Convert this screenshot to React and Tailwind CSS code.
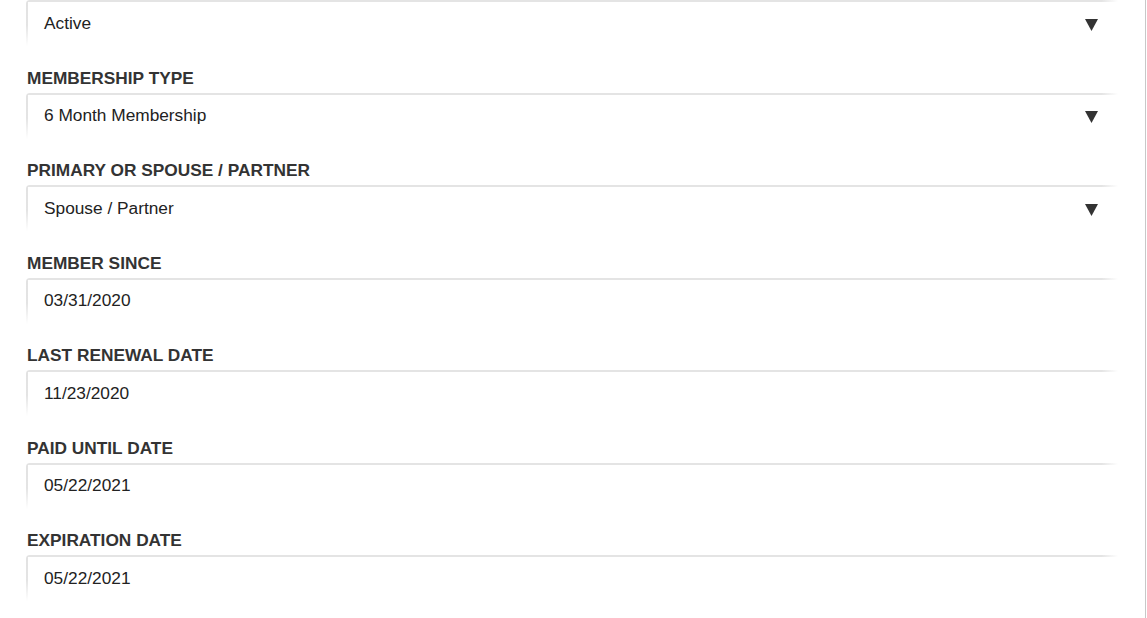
import React from 'react';

const fields = [
  { label: null, value: 'Active', select: true },
  { label: 'MEMBERSHIP TYPE', value: '6 Month Membership', select: true },
  { label: 'PRIMARY OR SPOUSE / PARTNER', value: 'Spouse / Partner', select: true },
  { label: 'MEMBER SINCE', value: '03/31/2020' },
  { label: 'LAST RENEWAL DATE', value: '11/23/2020' },
  { label: 'PAID UNTIL DATE', value: '05/22/2021' },
  { label: 'EXPIRATION DATE', value: '05/22/2021' },
];

const Caret = () => (
  <svg width="13" height="12" viewBox="0 0 13 12" className="shrink-0">
    <polygon points="0,0 13,0 6.5,12" fill="#333" />
  </svg>
);

const Field = ({ label, value, select }) => (
  <div className="mb-[21.5px]">
    {label && (
      <label className="block h-[21px] leading-[20px] mb-[4px] pl-px text-[17.3px] font-bold text-[#333]">
        {label}
      </label>
    )}
    <div className="flex items-center justify-between h-[46px] pl-[18px] pr-[20px] rounded-tl-[4px] text-[17.3px] text-[#222] [background:linear-gradient(to_bottom,#e2e2e2,#e4e4e4_55%,#fff)_left_top/2px_100%_no-repeat,linear-gradient(to_right,#e4e4e4,#e4e4e4_98.5%,#fff)_left_top/100%_2px_no-repeat,#fff]">
      <span className="pt-px">{value}</span>
      {select && (
        <span className="pt-[3px]">
          <Caret />
        </span>
      )}
    </div>
  </div>
);

export default function App() {
  return (
    <div className="w-[1147px] h-[618px] bg-white overflow-hidden" style={{ fontFamily: '"Liberation Sans", Arial, sans-serif' }}>
      <div className="w-[1146px] h-full border-r border-[#c8c8c8] pl-[26px] pr-[27px]">
        {fields.map((f, i) => (
          <Field key={i} {...f} />
        ))}
      </div>
    </div>
  );
}
